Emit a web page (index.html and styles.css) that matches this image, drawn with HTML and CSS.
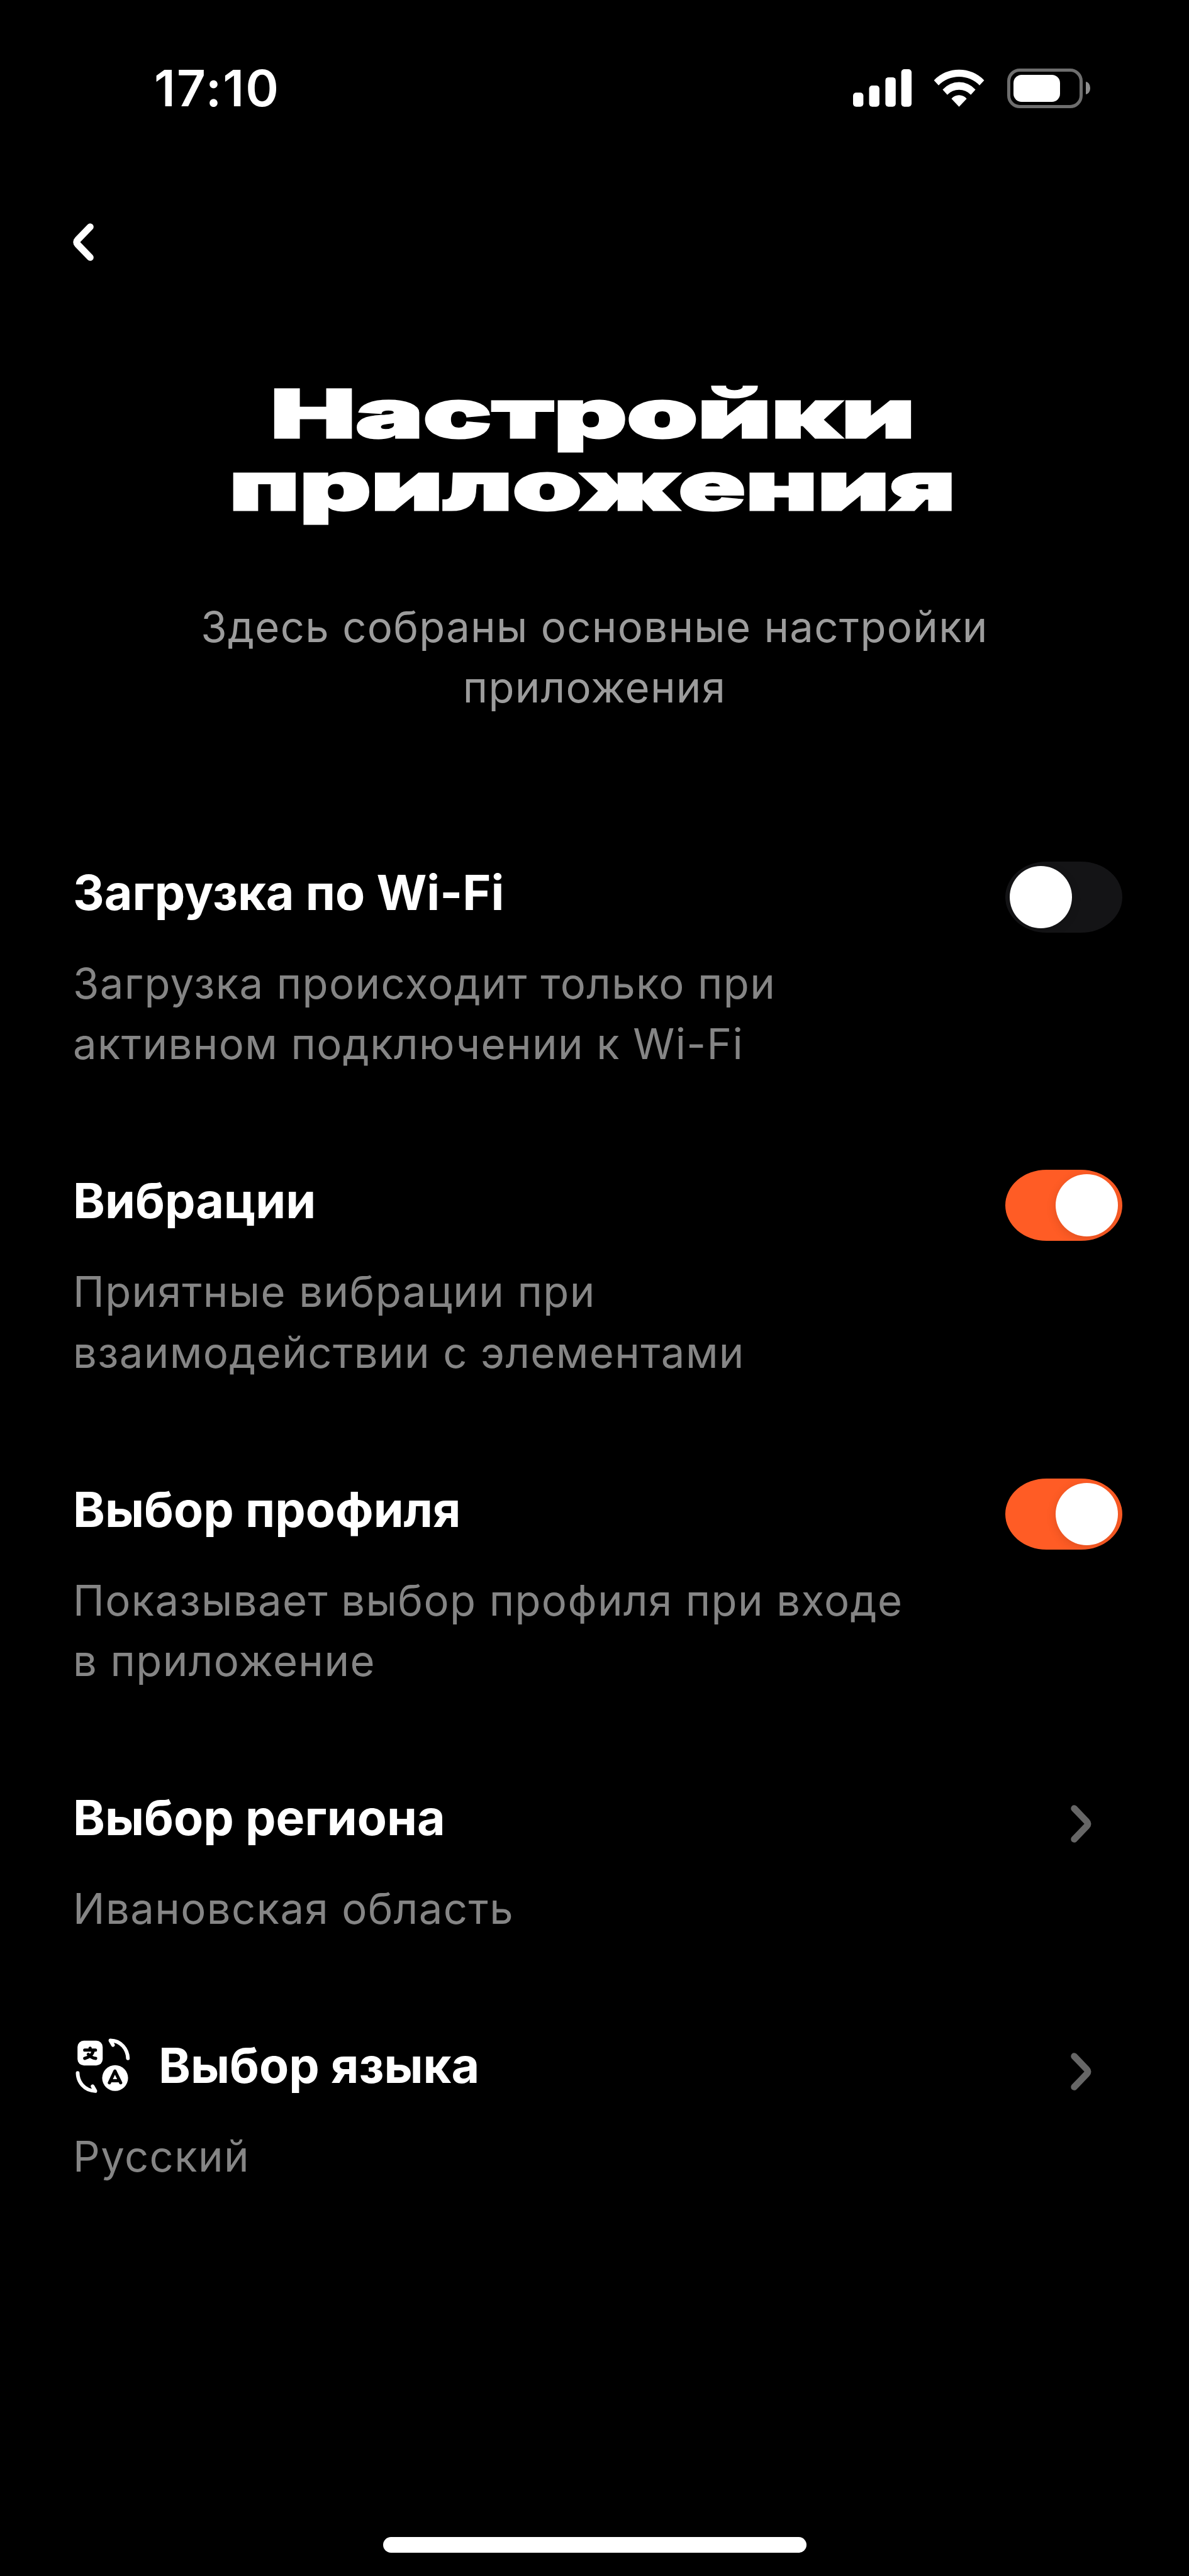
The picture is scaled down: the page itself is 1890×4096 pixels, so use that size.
FILE: index.html
```
<!DOCTYPE html>
<html lang="ru">
<head>
  <meta charset="UTF-8" />
  <meta name="viewport" content="width=device-width, initial-scale=1.0" />
  <title>Настройки приложения</title>
  <link rel="stylesheet" href="styles.css">
</head>
<body>

  <div class="status-bar">
    <span class="time">17:10</span>
    <div class="status-icons">
      <svg class="signal" viewBox="0 0 93 60">
        <rect x="0" y="37.3" width="16.4" height="22.5" rx="5" />
        <rect x="25.5" y="26" width="16.4" height="33.8" rx="5" />
        <rect x="51.4" y="12.9" width="16.4" height="46.9" rx="5" />
        <rect x="76.6" y="0" width="16.4" height="59.8" rx="5" />
      </svg>
      <svg class="wifi" viewBox="0 0 81 60">
        <path d="M0.6 17.7A55.2 55.2 0 0 1 80.4 17.7L73 25.7A45.5 45.5 0 0 0 8 25.7Z" />
        <path d="M14.4 32.4A34.8 34.8 0 0 1 66.6 32.4L59.2 40.7A25.9 25.9 0 0 0 21.8 40.7Z" />
        <path d="M28.4 47.1A15.5 15.5 0 0 1 52.6 47.1L40.5 59.7Z" />
      </svg>
      <div class="battery">
        <div class="battery-body"><div class="battery-level"></div></div>
        <div class="battery-cap"></div>
      </div>
    </div>
  </div>

  <nav>
    <svg class="back" viewBox="0 0 33 60">
      <path d="M27.3 5.7L7.5 26.3Q4 30 7.5 33.7L27.3 54.3" />
    </svg>
  </nav>

  <header>
    <h1><span class="line-1">Настройки</span><span class="line-2">приложения</span></h1>
    <p>Здесь собраны основные настройки<br>приложения</p>
  </header>

  <main class="settings">
    <section class="setting">
      <div class="setting-text">
        <h2>Загрузка по Wi-Fi</h2>
        <p>Загрузка происходит только при<br>активном подключении к Wi-Fi</p>
      </div>
      <div class="toggle"><div class="knob"></div></div>
    </section>

    <section class="setting">
      <div class="setting-text">
        <h2>Вибрации</h2>
        <p>Приятные вибрации при<br>взаимодействии с элементами</p>
      </div>
      <div class="toggle on"><div class="knob"></div></div>
    </section>

    <section class="setting">
      <div class="setting-text">
        <h2>Выбор профиля</h2>
        <p>Показывает выбор профиля при входе<br>в приложение</p>
      </div>
      <div class="toggle on"><div class="knob"></div></div>
    </section>

    <section class="setting">
      <div class="setting-text">
        <h2>Выбор региона</h2>
        <p>Ивановская область</p>
      </div>
      <svg class="chevron" viewBox="0 0 33 60">
        <path d="M5.5 5.5L25.5 26.3Q29 30 25.5 33.7L5.5 54.5" />
      </svg>
    </section>

    <section class="setting">
      <div class="setting-text">
        <h2>
          <svg class="lang" viewBox="28 38 326 326">
            <rect x="40" y="52" width="150" height="148" rx="38" fill="#fff" />
            <circle cx="264" cy="275" r="77" fill="#fff" />
            <g fill="none" stroke="#000" stroke-width="19" stroke-linecap="round" stroke-linejoin="round">
              <path d="M83 108H147M115 97V106M134 110C130 134 110 152 83 158M104 134C116 148 132 156 148 158" />
              <path d="M230 303L263 233L297 303M243 291H284" />
            </g>
            <g fill="none" stroke="#fff" stroke-width="22" stroke-linecap="round" stroke-linejoin="round">
              <path d="M340 157C338 104 300 52 236 51L251 78" />
              <path d="M41 245C42 298 80 350 146 352L130 324" />
            </g>
          </svg>
          <span>Выбор языка</span>
        </h2>
        <p>Русский</p>
      </div>
      <svg class="chevron" viewBox="0 0 33 60">
        <path d="M5.5 5.5L25.5 26.3Q29 30 25.5 33.7L5.5 54.5" />
      </svg>
    </section>
  </main>

  <div class="home-indicator"></div>

</body>
</html>
```
FILE: styles.css
```
* {
  margin: 0;
  padding: 0;
  box-sizing: border-box;
}

body {
  width: 1890px;
  height: 4096px;
  display: flex;
  flex-direction: column;
  background-color: #000;
  color: #fff;
  font-family: Inter, "Liberation Sans", sans-serif;
  overflow: hidden;
}

svg {
  display: block;
  flex: none;
}

/* Status bar */
.status-bar {
  display: flex;
  justify-content: space-between;
  align-items: center;
  padding: 90px 157px 0 245px;
}

.time {
  font-size: 80px;
  line-height: 100px;
  font-weight: 600;
  letter-spacing: 2.2px;
}

.status-icons {
  display: flex;
  align-items: center;
}

.signal {
  width: 93px;
  height: 60px;
  fill: #fff;
}

.wifi {
  width: 81px;
  height: 60px;
  margin: 0 36px 0 35px;
  fill: #fff;
}

.battery {
  display: flex;
  align-items: center;
  gap: 5px;
}

.battery-body {
  width: 120px;
  height: 63px;
  padding: 5px;
  border: 5px solid #6e6e6e;
  border-radius: 20px;
}

.battery-level {
  width: 74px;
  height: 43px;
  border-radius: 13px;
  background-color: #fff;
}

.battery-cap {
  width: 7px;
  height: 20px;
  border-radius: 0 7px 7px 0 / 0 10px 10px 0;
  background-color: #8e8e8e;
}

nav {
  padding: 165px 116px 0;
}

.back {
  width: 33px;
  height: 60px;
  fill: none;
  stroke: #fff;
  stroke-width: 11;
  stroke-linecap: round;
}

/* Heading */
header {
  padding-top: 185px;
  text-align: center;
}

header h1 {
  font-size: 106px;
  line-height: 115px;
  font-weight: 900;
  -webkit-text-stroke: 3px #fff;
}

header h1 span {
  display: block;
  width: fit-content;
  margin: 0 auto;
}

.line-1 {
  transform: translateX(-3px) scaleX(1.7);
}

.line-2 {
  transform: translateX(-3px) scaleX(1.66);
}

header p {
  margin-top: 119px;
  font-size: 67px;
  line-height: 96.4px;
  letter-spacing: 1.3px;
  color: #9c9c9c;
}

/* Settings list */
.settings {
  display: flex;
  flex-direction: column;
  gap: 155.6px;
  padding: 232px 106px 0 116px;
}

.setting {
  display: flex;
  justify-content: space-between;
  align-items: flex-start;
}

.setting h2 {
  display: flex;
  align-items: center;
  gap: 45px;
  height: 91px;
  font-size: 77px;
  line-height: 91px;
  font-weight: 700;
}

.setting p {
  margin-top: 51px;
  font-size: 67px;
  line-height: 96.4px;
  letter-spacing: 1.4px;
  color: #858585;
}

.toggle {
  display: flex;
  align-items: center;
  width: 186px;
  height: 113px;
  margin-top: -4px;
  padding: 0 7px;
  border-radius: 66px / 57px;
  background-color: #141416;
}

.toggle.on {
  justify-content: flex-end;
  background-color: #ff5c25;
}

.knob {
  width: 99px;
  height: 99px;
  border-radius: 50%;
  background-color: #fff;
  box-shadow: 0 4px 16px rgba(0, 0, 0, 0.12);
}

.chevron {
  width: 33px;
  height: 60px;
  margin: 25px 49px 0 0;
  fill: none;
  stroke: #666;
  stroke-width: 10.5;
  stroke-linecap: round;
}

.lang {
  width: 87px;
  height: 87px;
  margin-left: 4px;
}

.home-indicator {
  width: 673px;
  height: 25px;
  margin: auto auto 37px;
  border-radius: 12.5px;
  background-color: #fff;
}
```
